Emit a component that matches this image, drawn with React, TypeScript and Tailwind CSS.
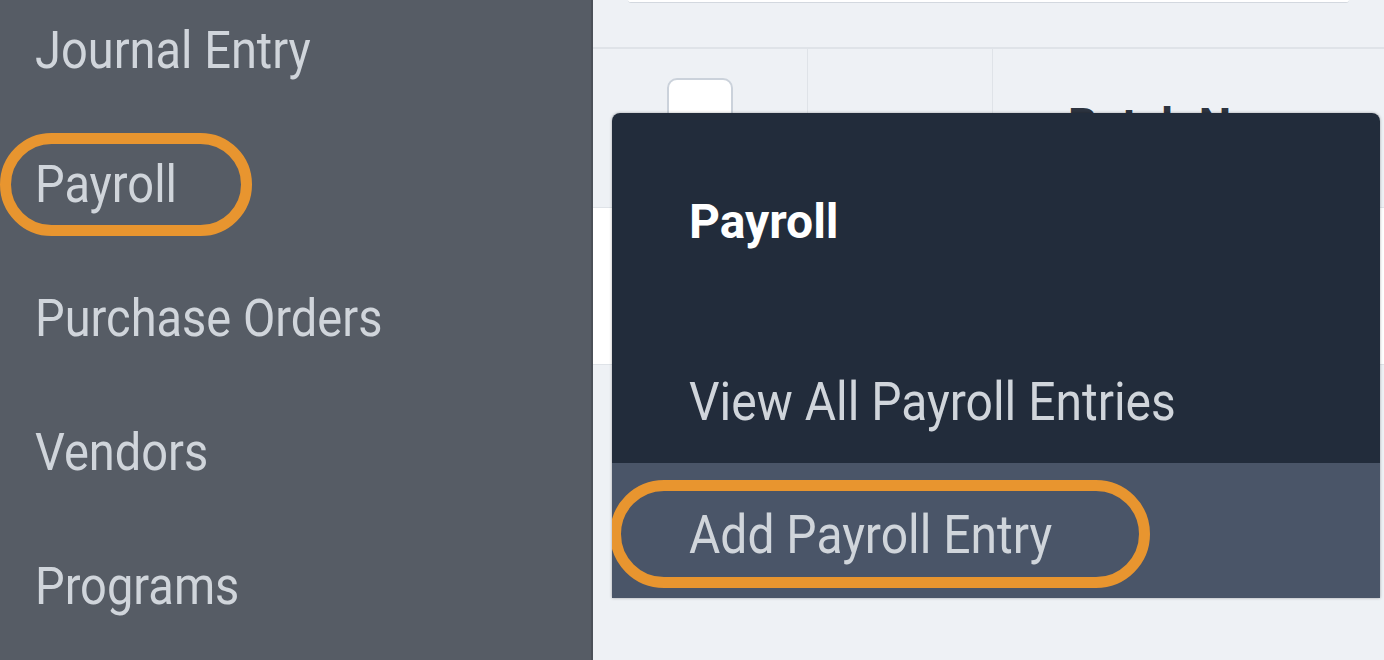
import React from "react";

const navItems = ["Journal Entry", "Payroll", "Purchase Orders", "Vendors", "Programs"];

const App = () => {
    return (
        <div className="relative flex w-[1384px] h-[660px] overflow-hidden bg-[#eef1f5]" style={{fontFamily: "Roboto, 'Liberation Sans', sans-serif"}}>
            {/* sidebar */}
            <aside className="w-[593px] shrink-0 h-full bg-[#565c65] border-r-2 border-[#4b5058] flex flex-col pt-[14px]">
                {navItems.map(item => (
                    <div key={item} className="relative shrink-0 h-[134px] flex items-start pl-[35px]">
                        <span className="text-[47px] leading-[72px] text-[#d0d5db] scale-y-[1.1]">{item}</span>
                        {item === "Payroll" && (
                            <span className="absolute left-0 top-[-15px] w-[252px] h-[103px] rounded-full border-[11px] border-[#e8952f]" />
                        )}
                    </div>
                ))}
            </aside>

            {/* main content behind the menu */}
            <main className="flex-1 flex flex-col">
                <div className="h-[49px] shrink-0 border-b-2 border-[#dfe3e8] px-[35px]">
                    <div className="h-[3px] bg-white border-b border-[#d3d8df] rounded-b-md" />
                </div>
                <div className="h-[159px] shrink-0 flex border-b border-[#dfe3e8]">
                    <div className="w-[215px] border-r border-[#dfe3e8] flex justify-center pt-[29px]">
                        <div className="w-[66px] h-[66px] bg-white border-2 border-[#cbd2db] rounded-[10px]" />
                    </div>
                    <div className="w-[185px] border-r border-[#dfe3e8]" />
                    <div className="flex-1 pl-[75px] pt-[53px]">
                        <span className="text-[46px] leading-none font-bold text-[#2d3440]">Batch No.</span>
                    </div>
                </div>
                <div className="h-[157px] shrink-0 bg-white border-b border-[#dfe3e8]" />
            </main>

            {/* dropdown menu */}
            <div className="absolute left-[612px] top-[113px] w-[768px] rounded-t-[8px] overflow-hidden shadow-[0_0_3px_rgba(0,0,0,0.35)]">
                <div className="h-[350px] bg-[#222c3b] flex flex-col pl-[77px]">
                    <div className="h-[218px] flex items-center">
                        <span className="text-[48px] font-bold text-white">Payroll</span>
                    </div>
                    <div className="h-[132px] flex items-start pt-[35px]">
                        <span className="text-[48px] leading-[72px] text-[#d0d5db] scale-y-[1.1] origin-left">View All Payroll Entries</span>
                    </div>
                </div>
                <div className="relative h-[135px] bg-[#4a5568] flex items-center pl-[77px] pt-[9px]">
                    <span className="text-[48px] leading-[72px] text-[#d0d5db] scale-y-[1.1] origin-left">Add Payroll Entry</span>
                    <span className="absolute left-[-2px] top-[17px] w-[540px] h-[108px] rounded-full border-[11px] border-[#e8952f]" />
                </div>
            </div>
        </div>
    );
};

export default App;
